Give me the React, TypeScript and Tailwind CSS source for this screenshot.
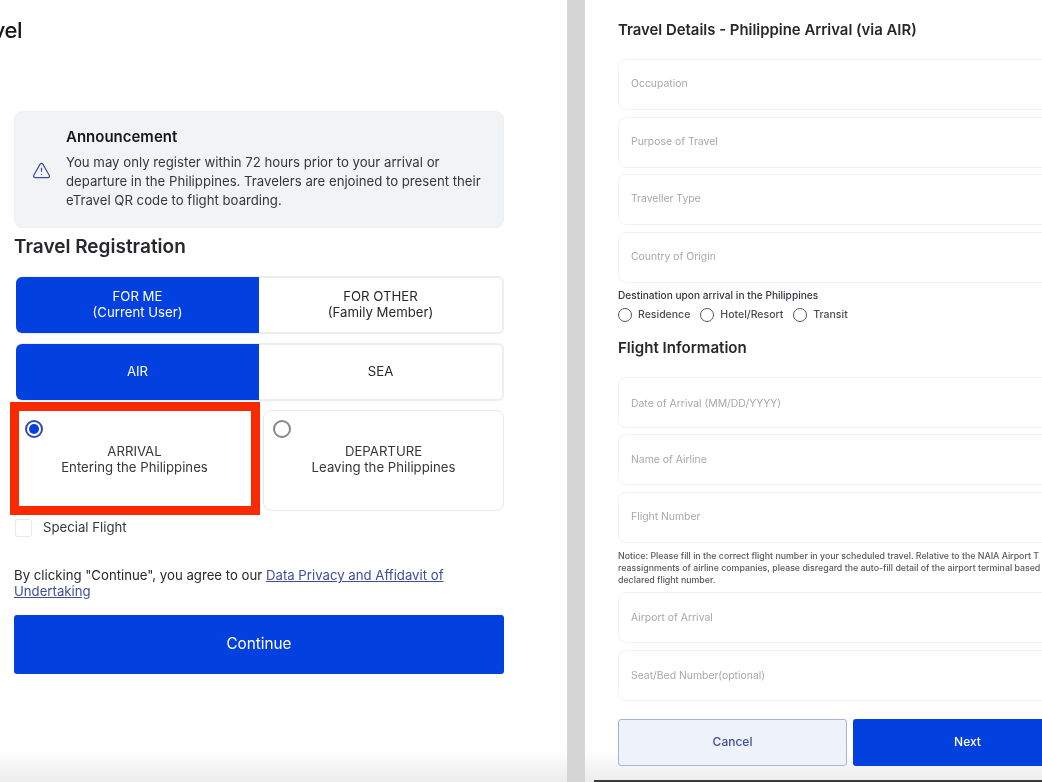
import { TriangleAlert } from "lucide-react";

const fontStack = "font-['Inter','Liberation_Sans',sans-serif]";

function Toggle({ left, right }: { left: string[]; right: string[] }) {
  return (
    <div className="ml-[2px] flex h-[58px] w-[488px] rounded-[6px] border-2 border-[#ecedef]">
      <div className="-my-[1px] -ml-[2px] flex w-[243px] flex-col items-center justify-center rounded-l-[6px] bg-[#0340e0] pb-[2px] text-[13.2px] leading-[16px] text-white">
        {left.map((line) => (
          <span key={line}>{line}</span>
        ))}
      </div>
      <div className="flex flex-1 flex-col items-center justify-center pb-[2px] text-[13.2px] leading-[16px] text-[#26282c]">
        {right.map((line) => (
          <span key={line}>{line}</span>
        ))}
      </div>
    </div>
  );
}

function Field({ label, className = "" }: { label: string; className?: string }) {
  return (
    <div className={`flex h-[51px] w-[520px] items-center rounded-[8px] border border-[#f1f2f4] pl-[12px] text-[10.4px] text-[#a5a8ad] ${className}`}>
      {label}
    </div>
  );
}

function SmallRadio({ label }: { label: string }) {
  return (
    <div className="flex items-center gap-[6px]">
      <span className="h-[14px] w-[14px] rounded-full border border-[#55585e]" />
      <span>{label}</span>
    </div>
  );
}

export default function App() {
  return (
    <div className={`relative flex h-[782px] w-[1042px] overflow-hidden bg-white blur-[0.4px] ${fontStack}`}>
      {/* video fade along the bottom edge */}
      <div className="pointer-events-none absolute inset-x-0 bottom-0 h-[32px] bg-gradient-to-b from-transparent to-[#ececec]" />

      {/* left panel */}
      <div className="relative w-[567px] shrink-0">
        <div className="mt-[17px] flex h-[26px] w-[22px] justify-end overflow-hidden text-[22px] leading-[26px] font-medium tracking-[-0.5px] text-[#15171a]">
          <span>eTravel</span>
        </div>

        <div className="ml-[14px] mt-[68px] w-[490px]">
          <div className="flex h-[117px] items-center rounded-[8px] border border-[#eef0f2] bg-[#f2f3f5]">
            <TriangleAlert className="ml-[17px] mt-[1px] shrink-0 text-[#3f4d9c]" size={19} strokeWidth={1.5} />
            <div className="ml-[15px] pb-[2px]">
              <div className="text-[15px] leading-[20px] font-semibold text-[#15171a]">Announcement</div>
              <p className="mt-[6px] text-[13.2px] leading-[19px] text-[#34373c]">
                You may only register within 72 hours prior to your arrival or
                <br />
                departure in the Philippines. Travelers are enjoined to present their
                <br />
                eTravel QR code to flight boarding.
              </p>
            </div>
          </div>

          <h1 className="mt-[5px] text-[19px] leading-[28px] font-semibold text-[#26282c]">Travel Registration</h1>

          <div className="mt-[15px] flex flex-col gap-[9px]">
            <Toggle left={["FOR ME", "(Current User)"]} right={["FOR OTHER", "(Family Member)"]} />
            <Toggle left={["AIR"]} right={["SEA"]} />
          </div>

          <div className="ml-[2px] mt-[9px] flex h-[101px] w-[488px] gap-[3px]">
            <div className="relative flex w-[244px] flex-col items-center pr-[7px] pt-[33px] text-[13.2px] leading-[16px] text-[#34373c]">
              <span className="absolute left-[-6px] top-[-8px] h-[113px] w-[250px] border-[9px] border-[#fa2a00]" />
              <span className="absolute left-[9px] top-[10px] flex h-[18px] w-[18px] items-center justify-center rounded-full border-2 border-[#2f49b5]">
                <span className="h-[10px] w-[10px] rounded-full bg-[#0340e0]" />
              </span>
              <span>ARRIVAL</span>
              <span>Entering the Philippines</span>
            </div>
            <div className="relative flex flex-1 flex-col items-center rounded-[8px] border border-[#e8e9ec] pt-[32px] text-[13.2px] leading-[16px] text-[#34373c]">
              <span className="absolute left-[9px] top-[9px] h-[18px] w-[18px] rounded-full border-2 border-[#85878b]" />
              <span>DEPARTURE</span>
              <span>Leaving the Philippines</span>
            </div>
          </div>

          <div className="mt-[8px] flex h-[18px] gap-[11px] text-[13.2px] leading-[16px] text-[#34373c]">
            <span className="ml-[1px] h-[18px] w-[17px] rounded-[3px] border border-[#e8e9ec]" />
            <span>Special Flight</span>
          </div>

          <p className="mt-[30px] text-[13.2px] leading-[16px] text-[#26282c]">
            By clicking "Continue", you agree to our{" "}
            <span className="text-[#3f4d9c] underline">Data Privacy and Affidavit of Undertaking</span>
          </p>

          <button className="mt-[16px] h-[59px] w-full rounded-[3px] bg-[#0340e0] text-[15.3px] text-white">Continue</button>
        </div>
      </div>

      {/* divider */}
      <div className="relative w-[18px] shrink-0 bg-[#d6d6d6]" />

      {/* right panel */}
      <div className="relative min-w-0 flex-1 pl-[33px]">
        <h2 className="mt-[20px] text-[14.9px] leading-[20px] font-semibold text-[#26282c]">Travel Details - Philippine Arrival (via AIR)</h2>

        <div className="mt-[19px] flex flex-col gap-[6.5px]">
          <Field label="Occupation" className="pb-[2px]" />
          <Field label="Purpose of Travel" className="pb-[1px]" />
          <Field label="Traveller Type" className="pb-[2px]" />
          <Field label="Country of Origin" className="pb-[1px]" />
        </div>

        <div className="mt-[5px] text-[10.15px] leading-[14px] font-medium text-[#34373c]">Destination upon arrival in the Philippines</div>
        <div className="mt-[5px] flex gap-[10px] text-[10.5px] leading-[16px] font-medium text-[#4a4d52]">
          <SmallRadio label="Residence" />
          <SmallRadio label="Hotel/Resort" />
          <SmallRadio label="Transit" />
        </div>

        <h3 className="mt-[15px] text-[15.1px] leading-[20px] font-semibold text-[#26282c]">Flight Information</h3>

        <div className="mt-[19px] flex flex-col gap-[6.5px]">
          <Field label="Date of Arrival (MM/DD/YYYY)" className="pt-[4px]" />
          <Field label="Name of Airline" />
          <Field label="Flight Number" className="pb-[1px]" />
        </div>

        <p className="mt-[7px] w-[424px] text-[8.8px] leading-[12px] font-medium whitespace-nowrap text-[#55585e]">
          Notice: Please fill in the correct flight number in your scheduled travel. Relative to the NAIA Airport T
          <br />
          reassignments of airline companies, please disregard the auto-fill detail of the airport terminal based
          <br />
          declared flight number.
        </p>

        <div className="mt-[6.5px] flex flex-col gap-[6.5px]">
          <Field label="Airport of Arrival" />
          <Field label="Seat/Bed Number(optional)" className="pt-[1px]" />
        </div>

        <div className="mt-[18px] flex w-[520px] gap-[6px]">
          <button className="h-[47px] w-[229px] rounded-[3px] border border-[#a9b3d3] bg-[#eef2fb] text-[12px] font-medium text-[#3f4d9c]">Cancel</button>
          <button className="h-[47px] w-[229px] rounded-[3px] bg-[#0340e0] text-[12px] font-medium text-white">Next</button>
        </div>
      </div>

      <div className="absolute bottom-0 left-[594px] right-0 h-[2px] bg-[#3a3a3a]" />
    </div>
  );
}
